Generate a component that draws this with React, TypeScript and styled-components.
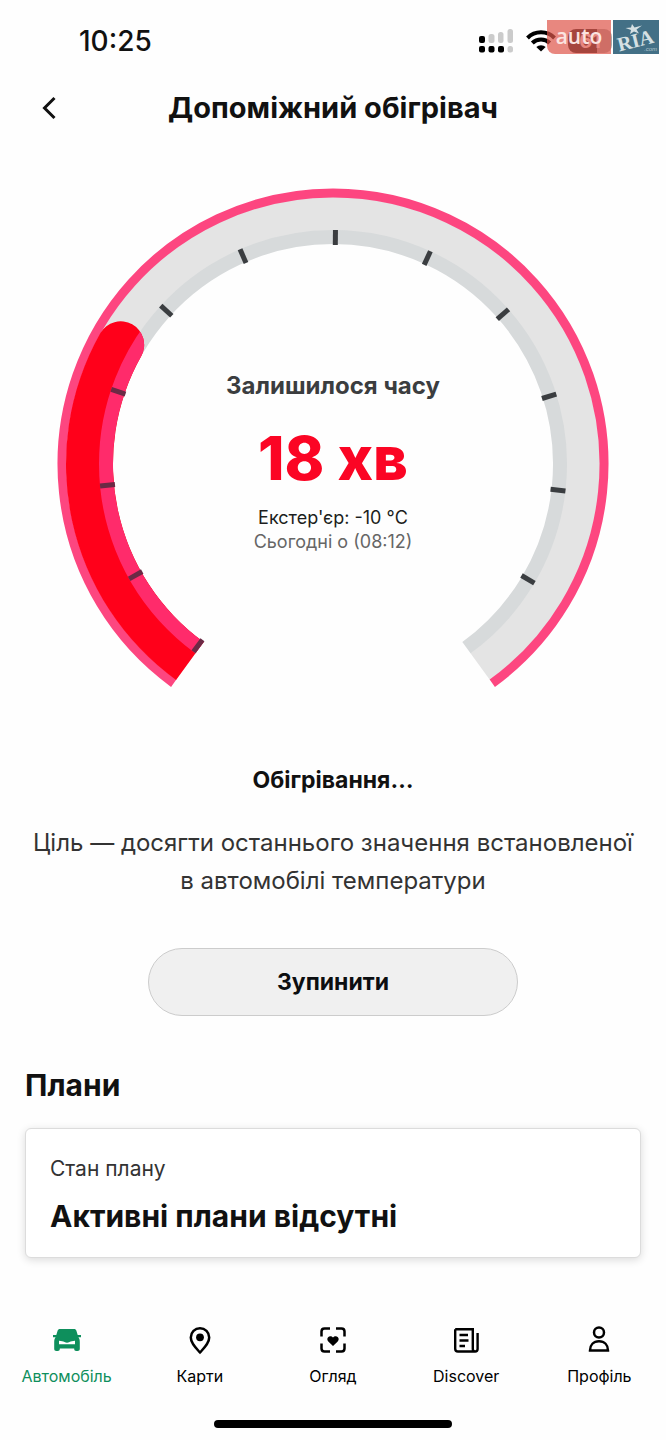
import React from 'react'
import styled, { createGlobalStyle } from 'styled-components'

const CENTER = 276
const START = -144
const STEP = 24
const PROGRESS = -60.6

const point = (radius: number, angle: number) => {
  const rad = (angle * Math.PI) / 180
  return `${(CENTER + radius * Math.sin(rad)).toFixed(2)} ${(CENTER - radius * Math.cos(rad)).toFixed(2)}`
}

const arc = (radius: number, from: number, to: number) =>
  `M${point(radius, from)} A${radius} ${radius} 0 ${to - from > 180 ? 1 : 0} 1 ${point(radius, to)}`

const progressShape =
  `${arc(267, START, PROGRESS)} A23.5 23.5 0 0 1 ${point(220, PROGRESS)} ` +
  `A220 220 0 0 0 ${point(220, START)} Z`

const ticks = Array.from({ length: 12 }, (_, i) => START + 0.6 + i * STEP)

const GaugeDial = () => (
  <Dial viewBox="0 0 552 500" aria-hidden="true">
    <defs>
      <clipPath id="progress">
        <path d={progressShape} />
      </clipPath>
    </defs>
    <g fill="none">
      <path d={arc(250, START, -START)} stroke="#e4e4e4" strokeWidth="34" />
      <path d={arc(227, START, -START)} stroke="#d7dadb" strokeWidth="14" />
      <path d={arc(271, START, -START)} stroke="#fd4680" strokeWidth="9" />
    </g>
    <path d={progressShape} fill="#ff001a" />
    <circle cx={CENTER} cy={CENTER} r="227" fill="none" stroke="#ff2b6b" strokeWidth="14" clipPath="url(#progress)" />
    {ticks.map(angle => (
      <rect
        key={angle}
        x={CENTER - 2.5}
        y={CENTER - 234}
        width="5"
        height="15"
        fill={angle < PROGRESS ? '#6b2a45' : '#3a3d40'}
        transform={`rotate(${angle} ${CENTER} ${CENTER})`}
      />
    ))}
  </Dial>
)

const SignalIcon = () => (
  <svg width="35" height="25" viewBox="0 0 35 25" aria-hidden="true">
    <g fill="#cbcbcb">
      <rect x="9.500" y="5" width="6" height="9" rx="2.500" />
      <rect x="19" y="3" width="5.500" height="11" rx="2.500" />
      <rect x="28.500" y="0" width="5.500" height="14" rx="2.500" />
      <rect x="28.500" y="17" width="5.500" height="6.500" rx="2.500" />
    </g>
    <g fill="#000">
      <rect x="0" y="7" width="6" height="7" rx="2" />
      <rect x="0" y="17" width="6" height="6.500" rx="2" />
      <rect x="9.500" y="17" width="6" height="6.500" rx="2" />
      <rect x="19" y="17" width="6" height="6.500" rx="2" />
    </g>
  </svg>
)

const WifiIcon = () => (
  <svg width="30" height="22" viewBox="0 0 30 22" aria-hidden="true">
    <g fill="none" stroke="#000" strokeWidth="4">
      <path d="M1.500 8a19 19 0 0 1 27 0" />
      <path d="M6.300 13a12.300 12.300 0 0 1 17.400 0" />
    </g>
    <path d="M15 21.500l-4.700-4.400a6.600 6.600 0 0 1 9.400 0z" fill="#000" />
  </svg>
)

const BackIcon = () => (
  <svg width="14" height="24" viewBox="0 0 14 24" fill="none" stroke="#111" strokeWidth="3" aria-hidden="true">
    <path d="M12.500 2L2.500 12l10 10" />
  </svg>
)

const CarIcon = () => (
  <svg width="32" height="32" viewBox="0 0 32 32" fill="currentColor" aria-hidden="true">
    <path d="M9 5h14c1.300 0 2 .6 2.400 1.800L26.700 11H30v2.300h-2.600c1 1.200 1.400 2.700 1.400 4.700v6.800c0 1.500-.8 2.200-2.200 2.200h-1.400c-1.300 0-2-.7-2-2v-.5H8.800v.5c0 1.300-.7 2-2 2H5.400c-1.400 0-2.200-.7-2.200-2.200V18c0-2 .4-3.500 1.400-4.700H2V11h3.300l1.300-4.200C7 5.600 7.700 5 9 5z" />
    <path d="M8 16.800c2.500.2 4 .4 5.500 1.200 1.700.9 3.300.9 5 0 1.500-.8 3-1 5.500-1.200v3.400H8z" fill="#fff" />
  </svg>
)

const PinIcon = () => (
  <svg width="32" height="32" viewBox="0 0 32 32" aria-hidden="true">
    <path d="M16 28.500c-4.700-5.200-9.200-9.500-9.200-15.100a9.200 9.200 0 0 1 18.400 0c0 5.600-4.500 9.900-9.200 15.100z" fill="none" stroke="currentColor" strokeWidth="2.500" />
    <circle cx="16" cy="13.300" r="3.900" fill="currentColor" />
  </svg>
)

const InspectIcon = () => (
  <svg width="32" height="32" viewBox="0 0 32 32" aria-hidden="true">
    <path
      d="M13 4.500H7.500Q4.500 4.500 4.500 7.500v5M19 4.500h5.500q3 0 3 3v5M13 27.500H7.500q-3 0-3-3v-5M19 27.500h5.500q3 0 3-3v-5"
      fill="none"
      stroke="currentColor"
      strokeWidth="2.500"
    />
    <path d="M16 22l-4.500-4.300c-1.500-1.500-1.500-3.400-.4-4.500 1.300-1.300 3.600-1.200 4.900.4 1.300-1.600 3.600-1.700 4.900-.4 1.100 1.100 1.100 3-.4 4.500z" fill="currentColor" />
  </svg>
)

const NewsIcon = () => (
  <svg width="32" height="32" viewBox="0 0 32 32" fill="none" stroke="currentColor" strokeWidth="2.400" aria-hidden="true">
    <path d="M5.200 5.200h17.600V25c0 1.500.8 2.500 2.300 2.500s2.500-1 2.500-2.500V9M25 27.500H8c-2 0-2.800-1-2.800-2.800V5.200M9.500 11h8.500M9.500 16.500h9M9.500 22h5.500" />
  </svg>
)

const ProfileIcon = () => (
  <svg width="32" height="32" viewBox="0 0 32 32" fill="none" stroke="currentColor" strokeWidth="2.500" aria-hidden="true">
    <circle cx="16" cy="8.500" r="5" />
    <path d="M7 26.500c0-5.500 3.500-9.200 9-9.200s9 3.700 9 9.200z" />
  </svg>
)

const tabs = [
  { label: 'Автомобіль', icon: <CarIcon />, active: true },
  { label: 'Карти', icon: <PinIcon /> },
  { label: 'Огляд', icon: <InspectIcon /> },
  { label: 'Discover', icon: <NewsIcon /> },
  { label: 'Профіль', icon: <ProfileIcon /> }
]

const App = () => (
  <Page>
    <GlobalStyle />
    <StatusBar>
      <Clock>10:25</Clock>
      <StatusIcons>
        <SignalIcon />
        <WifiIcon />
        <Battery>61</Battery>
      </StatusIcons>
      <Watermark>
        <AutoTag>auto</AutoTag>
        <RiaTag>
          <svg width="46" height="34" viewBox="0 0 46 34" aria-label="RIA.com">
            <path d="M19 4l2.500 3.500 7.500-2-5.500 4 2.500 4-5-2-4 2.500 1-4-5.500-2 5.500-.5z" fill="#d5e0e3" />
            <g fill="#d5e0e3" transform="rotate(-14 23 20)">
              <text x="4" y="27" fontFamily="Liberation Serif, serif" fontWeight="700" fontSize="20">RIA</text>
            </g>
            <text x="31" y="31" fontFamily="Liberation Sans, sans-serif" fontStyle="italic" fontSize="6" fill="#b4c8cf">.com</text>
          </svg>
        </RiaTag>
      </Watermark>
    </StatusBar>

    <Header>
      <BackButton type="button" aria-label="Назад"><BackIcon /></BackButton>
      <Title>Допоміжний обігрівач</Title>
    </Header>

    <main>
      <Gauge>
        <GaugeDial />
        <Readout>
          <ReadoutLabel>Залишилося часу</ReadoutLabel>
          <Minutes>18 хв</Minutes>
          <Detail>Екстер'єр: -10 °C</Detail>
          <Detail $muted>Сьогодні о (08:12)</Detail>
        </Readout>
      </Gauge>

      <Status>
        <StatusTitle>Обігрівання…</StatusTitle>
        <StatusText>Ціль — досягти останнього значення встановленої в автомобілі температури</StatusText>
        <StopButton type="button">Зупинити</StopButton>
      </Status>

      <Plans>
        <PlansTitle>Плани</PlansTitle>
        <Card>
          <CardLabel>Стан плану</CardLabel>
          <CardValue>Активні плани відсутні</CardValue>
        </Card>
      </Plans>
    </main>

    <TabBar>
      {tabs.map(tab => (
        <Tab key={tab.label} href="#" $active={tab.active}>
          {tab.icon}
          {tab.label}
        </Tab>
      ))}
    </TabBar>
    <HomeIndicator />
  </Page>
)

export default App

const GlobalStyle = createGlobalStyle`
  * {
    box-sizing: border-box;
  }
  body {
    margin: 0;
    background: #fefefe;
    color: #111;
    font-family: Inter, "Noto Sans", sans-serif;
  }
  h1, h2, h3, p {
    margin: 0;
  }
`

const Page = styled.div`
  display: flex;
  flex-direction: column;
  min-height: 100vh;
`

const StatusBar = styled.div`
  position: relative;
  display: flex;
  align-items: center;
  justify-content: space-between;
  height: 82px;
  padding: 0 54px 0 79px;
`

const Clock = styled.span`
  font-size: 28px;
  font-weight: 500;
  line-height: 32px;
`

const StatusIcons = styled.div`
  display: flex;
  align-items: center;
  gap: 12px;
`

const Battery = styled.span`
  width: 44px;
  height: 24px;
  border-radius: 8px;
  background: linear-gradient(90deg, #222 66%, #aaa 66%);
  color: #fff;
  font-size: 20px;
  font-weight: 700;
  line-height: 24px;
  text-align: center;
`

const Watermark = styled.div`
  position: absolute;
  top: 20px;
  right: 7px;
  display: flex;
  gap: 2px;
`

const AutoTag = styled.span`
  width: 64px;
  height: 34px;
  border-radius: 0 0 0 8px;
  background: rgba(222, 84, 72, 0.7);
  color: #fbe3e0;
  font-family: "Open Sans", sans-serif;
  font-size: 21px;
  font-weight: 600;
  line-height: 32px;
  text-align: center;
`

const RiaTag = styled.span`
  width: 46px;
  height: 34px;
  background: #437086;
`

const Header = styled.header`
  display: grid;
  grid-template-columns: 60px 1fr 60px;
  align-items: center;
  height: 52px;
`

const BackButton = styled.button`
  display: flex;
  justify-content: flex-end;
  padding: 4px;
  border: 0;
  background: none;
  cursor: pointer;
`

const Title = styled.h1`
  font-size: 29px;
  font-weight: 700;
  line-height: 36px;
  text-align: center;
`

const Gauge = styled.section`
  display: grid;
  justify-items: center;
  padding: 54px 57px 0;
`

const Dial = styled.svg`
  grid-area: 1 / 1;
  width: 100%;
  max-width: 600px;
`

const Readout = styled.div`
  grid-area: 1 / 1;
  align-self: center;
  padding-top: 48px;
  text-align: center;
`

const ReadoutLabel = styled.h2`
  color: #3b3d3f;
  font-size: 24px;
  font-weight: 700;
  line-height: 32px;
`

const Minutes = styled.p`
  padding: 20px 0 12px;
  color: #fb0524;
  font-size: 60px;
  font-weight: 800;
  line-height: 72px;
`

const Detail = styled.p<{ $muted?: boolean }>`
  color: ${p => (p.$muted ? '#666' : '#1c1e20')};
  font-size: 18px;
  line-height: 24px;
`

const Status = styled.section`
  display: flex;
  flex-direction: column;
  align-items: center;
  padding: 76px 24px 0;
  text-align: center;
`

const StatusTitle = styled.h2`
  font-size: 23px;
  font-weight: 700;
  line-height: 32px;
`

const StatusText = styled.p`
  padding: 28px 0 48px;
  color: #333;
  font-size: 24px;
  line-height: 38px;
`

const StopButton = styled.button`
  width: 60%;
  height: 68px;
  border: 1px solid #ccc;
  border-radius: 34px;
  background: #f0f0f0;
  color: #0c0e10;
  font-family: inherit;
  font-size: 23px;
  font-weight: 700;
  cursor: pointer;
`

const Plans = styled.section`
  padding: 50px 25px 0;
`

const PlansTitle = styled.h2`
  font-size: 30px;
  font-weight: 700;
  line-height: 38px;
`

const Card = styled.div`
  margin-top: 24px;
  padding: 22px 24px;
  border: 1px solid #dcdcdc;
  border-radius: 6px;
  background: #fff;
  box-shadow: 0 2px 8px rgba(0, 0, 0, 0.14);
`

const CardLabel = styled.p`
  color: #333;
  font-size: 21px;
  line-height: 36px;
`

const CardValue = styled.p`
  padding-top: 10px;
  font-size: 30px;
  font-weight: 700;
  line-height: 38px;
`

const TabBar = styled.nav`
  display: grid;
  grid-template-columns: repeat(5, 1fr);
  margin-top: auto;
  padding-bottom: 32px;
`

const Tab = styled.a<{ $active?: boolean }>`
  display: flex;
  flex-direction: column;
  align-items: center;
  gap: 8px;
  color: ${p => (p.$active ? '#0e8f5c' : '#000')};
  font-size: 16px;
  line-height: 24px;
  text-decoration: none;
`

const HomeIndicator = styled.div`
  align-self: center;
  width: 238px;
  height: 8px;
  margin-bottom: 12px;
  border-radius: 4px;
  background: #000;
`
